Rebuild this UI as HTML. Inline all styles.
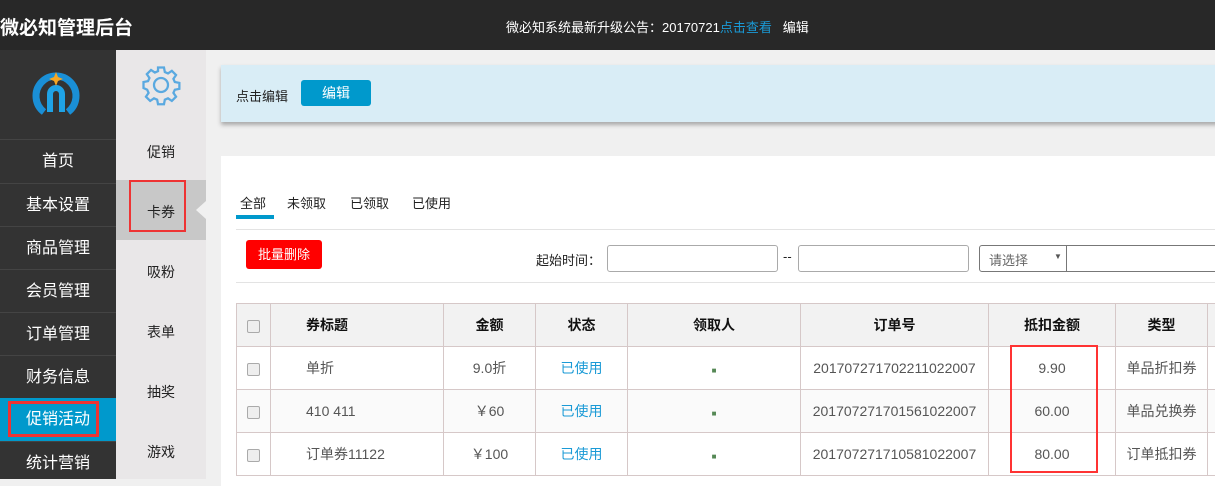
<!DOCTYPE html><html><head><meta charset="utf-8"><style>
*{margin:0;padding:0;box-sizing:border-box}
body{width:1215px;height:479px;overflow:hidden;background:#f0f0f0;font-family:"Liberation Sans","Noto Sans CJK SC",sans-serif;position:relative;font-size:13px;color:#333}
.a{position:absolute}
.top{left:0;top:0;width:1215px;height:50px;background:#282828}
.side{left:0;top:50px;width:116px;height:429px;background:#333}
.mi{position:absolute;left:0;width:116px;height:43px;line-height:43px;text-align:center;color:#fff;font-size:16px;border-top:1px solid #444}
.sub{left:116px;top:50px;width:90px;height:429px;background:#e9e7e8}
.si{position:absolute;left:116px;width:90px;text-align:center;font-size:14px;color:#222}
table{border-collapse:collapse;position:absolute;left:236px;top:303px;width:990px}
td,th{border:1px solid #d6c8c8;height:43px;text-align:center;font-size:14px;color:#555;font-weight:normal}
th{background:#f2f2f2;color:#111;font-weight:bold}
.cb{display:inline-block;width:13px;height:13px;border:1px solid #aaa;border-radius:2px;background:#eee;vertical-align:middle}
.blue{color:#1a9ad6}
.inp{position:absolute;height:27px;border:1px solid #aaa;border-radius:3px;background:#fff;top:245px}
</style></head><body>
<div class="a top"></div>
<div class="a" style="left:0;top:13px;color:#fff;font-size:19px;font-weight:bold">微必知管理后台</div>
<div class="a" style="left:506px;top:17px;color:#fff;font-size:13px">微必知系统最新升级公告：20170721<span class="blue">点击查看</span>&nbsp;&nbsp;&nbsp;编辑</div>
<div class="a side"></div>
<svg class="a" style="left:30px;top:68px" width="52" height="52" viewBox="0 0 52 52"><path d="M14 44 A20 20 0 1 1 38 44" fill="none" stroke="#1a8fd6" stroke-width="7"/><path d="M20 44 V26 a6 6 0 0 1 12 0 V44" fill="none" stroke="#1fa3e6" stroke-width="6"/><path d="M26 4 l2 5 5 2 -5 2 -2 5 -2 -5 -5 -2 5 -2z" fill="#f5a623"/></svg>
<div class="mi" style="top:139px">首页</div>
<div class="mi" style="top:183px">基本设置</div>
<div class="mi" style="top:226px">商品管理</div>
<div class="mi" style="top:269px">会员管理</div>
<div class="mi" style="top:312px">订单管理</div>
<div class="mi" style="top:355px">财务信息</div>
<div class="mi" style="top:398px;background:#0099cc;border:none">促销活动</div>
<div class="a" style="left:8px;top:401px;width:91px;height:36px;border:3px solid #e33"></div>
<div class="mi" style="top:441px">统计营销</div>
<div class="a sub"></div>
<svg class="a" style="left:140px;top:64px" width="42" height="42" viewBox="0 0 24 24"><path d="M12 8a4 4 0 1 0 0 8 4 4 0 0 0 0-8z M10.3 2h3.4l.5 2.6 1.8.8 2.2-1.5 2.4 2.4-1.5 2.2.8 1.8 2.6.5v3.4l-2.6.5-.8 1.8 1.5 2.2-2.4 2.4-2.2-1.5-1.8.8-.5 2.6h-3.4l-.5-2.6-1.8-.8-2.2 1.5-2.4-2.4 1.5-2.2-.8-1.8L2 13.7v-3.4l2.6-.5.8-1.8-1.5-2.2 2.4-2.4 2.2 1.5 1.8-.8z" fill="none" stroke="#5aa9e0" stroke-width="1.3"/></svg>
<div class="si" style="top:142px">促销</div>
<div class="a" style="left:116px;top:180px;width:90px;height:60px;background:#c8c8c8"></div>
<div class="a" style="left:196px;top:201px;width:0;height:0;border-top:9px solid transparent;border-bottom:9px solid transparent;border-right:10px solid #f0f0f0"></div>
<div class="a" style="left:129px;top:180px;width:57px;height:52px;border:2px solid #e33"></div>
<div class="si" style="top:202px">卡券</div>
<div class="si" style="top:262px">吸粉</div>
<div class="si" style="top:322px">表单</div>
<div class="si" style="top:382px">抽奖</div>
<div class="si" style="top:442px">游戏</div>
<div class="a" style="left:221px;top:65px;width:1000px;height:57px;background:#d9edf6;box-shadow:0 3px 4px #aaa"></div>
<div class="a" style="left:236px;top:86px;font-size:13px;color:#222">点击编辑</div>
<div class="a" style="left:301px;top:80px;width:70px;height:26px;background:#0099cc;border-radius:3px;color:#fff;text-align:center;line-height:26px;font-size:14px">编辑</div>
<div class="a" style="left:221px;top:156px;width:1000px;height:330px;background:#fff"></div>
<div class="a" style="left:240px;top:193px;font-size:13px;color:#222">全部</div>
<div class="a" style="left:287px;top:193px;font-size:13px;color:#222">未领取</div>
<div class="a" style="left:350px;top:193px;font-size:13px;color:#222">已领取</div>
<div class="a" style="left:412px;top:193px;font-size:13px;color:#222">已使用</div>
<div class="a" style="left:236px;top:215px;width:38px;height:4px;background:#0099cc"></div>
<div class="a" style="left:236px;top:229px;width:980px;height:1px;background:#e3e3e3"></div>
<div class="a" style="left:246px;top:240px;width:76px;height:29px;background:#f00;border-radius:3px;color:#fff;text-align:center;line-height:29px;font-size:13px">批量删除</div>
<div class="a" style="left:536px;top:250px;font-size:13px;color:#222">起始时间：</div>
<div class="inp" style="left:607px;width:171px"></div>
<div class="a" style="left:783px;top:249px;color:#222">--</div>
<div class="inp" style="left:798px;width:171px"></div>
<div class="inp" style="left:979px;width:250px;border-color:#777"></div>
<div class="a" style="left:1066px;top:245px;width:1px;height:27px;background:#777"></div>
<div class="a" style="left:989px;top:250px;color:#666">请选择</div>
<div class="a" style="left:1054px;top:252px;font-size:8px;color:#555">▼</div>
<div class="a" style="left:236px;top:282px;width:980px;height:1px;background:#e3e3e3"></div>
<table>
<tr><th style="width:34px"><span class="cb"></span></th><th style="width:173px;text-align:left;padding-left:35px">券标题</th><th style="width:92px">金额</th><th style="width:92px">状态</th><th style="width:173px">领取人</th><th style="width:188px">订单号</th><th style="width:127px">抵扣金额</th><th style="width:92px">类型</th><th></th></tr>
<tr><td><span class="cb"></span></td><td style="text-align:left;padding-left:35px">单折</td><td>9.0折</td><td class="blue">已使用</td><td><span style="font-size:8px;color:#585">■</span></td><td>201707271702211022007</td><td>9.90</td><td>单品折扣券</td><td></td></tr>
<tr style="background:#fafafa"><td><span class="cb"></span></td><td style="text-align:left;padding-left:35px">410 411</td><td>￥60</td><td class="blue">已使用</td><td><span style="font-size:8px;color:#585">■</span></td><td>201707271701561022007</td><td>60.00</td><td>单品兑换券</td><td></td></tr>
<tr><td><span class="cb"></span></td><td style="text-align:left;padding-left:35px">订单券11122</td><td>￥100</td><td class="blue">已使用</td><td><span style="font-size:8px;color:#585">■</span></td><td>201707271710581022007</td><td>80.00</td><td>订单抵扣券</td><td></td></tr>
</table>
<div class="a" style="left:1010px;top:345px;width:88px;height:128px;border:2px solid #f33"></div>
</body></html>
